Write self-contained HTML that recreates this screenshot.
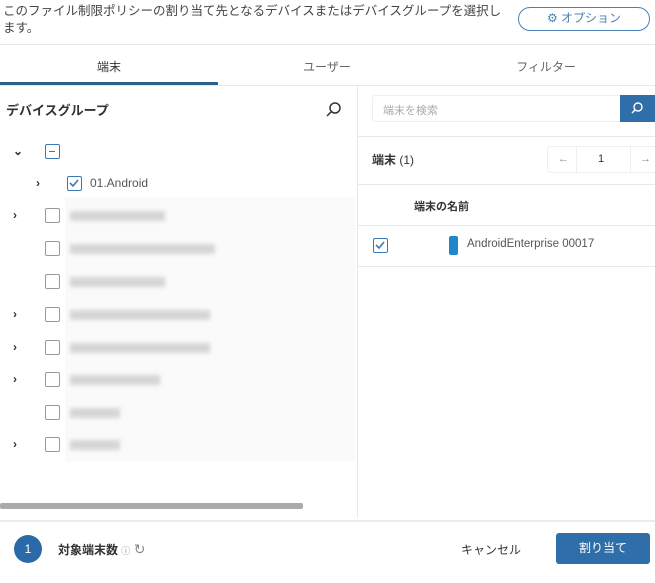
<!DOCTYPE html>
<html><head><meta charset="utf-8"><style>
*{margin:0;padding:0;box-sizing:border-box}
body{width:655px;height:583px;overflow:hidden;background:#fff;font-family:"Liberation Sans","Noto Sans CJK JP",sans-serif;color:#333;position:relative;font-size:12px}
.a{position:absolute}
.cb{position:absolute;width:15px;height:15px;border:1.5px solid #999;border-radius:2px;background:#fff}
.cbb{border-color:#3c78b4}
.chev{position:absolute;font-size:12px;color:#333;font-weight:bold}
.blur{position:absolute;height:10px;background:#ccc;filter:blur(2px);opacity:.8}
.hl{position:absolute;height:1px;background:#e8e8e8}
</style></head><body>
<div class="a" style="left:3px;top:3px;width:505px;font-size:12.5px;line-height:17px;color:#444">このファイル制限ポリシーの割り当て先となるデバイスまたはデバイスグループを選択します。</div>
<div class="a" style="left:518px;top:7px;width:132px;height:24px;border:1.5px solid #4a7fb5;border-radius:12px;font-size:12px;color:#4a7fb5;text-align:center;line-height:21px">⚙ オプション</div>
<div class="hl" style="left:0;top:44px;width:655px"></div>
<div class="a" style="left:0;top:58px;width:218px;text-align:center;font-size:12px">端末</div>
<div class="a" style="left:218px;top:58px;width:218px;text-align:center;font-size:12px;color:#666">ユーザー</div>
<div class="a" style="left:437px;top:58px;width:218px;text-align:center;font-size:12px;color:#666">フィルター</div>
<div class="a" style="left:0;top:82px;width:218px;height:3px;background:#2c5f8a"></div>
<div class="hl" style="left:0;top:85px;width:655px"></div>
<div class="a" style="left:357px;top:86px;width:1px;height:432px;background:#e8e8e8"></div>
<div class="a" style="left:6px;top:100px;font-size:13px;font-weight:bold">デバイスグループ</div>
<svg class="a" style="left:326px;top:101px" width="16" height="16"><circle cx="9" cy="7" r="5" fill="none" stroke="#333" stroke-width="1.5"/><line x1="5" y1="11" x2="1" y2="15" stroke="#333" stroke-width="1.5"/></svg>
<div class="chev" style="left:13px;top:144px">⌄</div>
<div class="cb cbb" style="left:45px;top:144px"><div style="position:absolute;left:3px;top:5.5px;width:6px;height:1.5px;background:#3c78b4"></div></div>
<div class="chev" style="left:36px;top:176px">›</div>
<div class="cb cbb" style="left:67px;top:176px"><svg width="12" height="12" style="position:absolute;left:0;top:0"><path d="M2 6 L5 9 L10 3" fill="none" stroke="#3c78b4" stroke-width="1.6"/></svg></div>
<div class="a" style="left:90px;top:176px;font-size:12px;color:#555">01.Android</div>
<div class="a" style="left:65px;top:197px;width:290px;height:265px;background:#fafafa"></div>
<div class="chev" style="left:13px;top:208px">›</div><div class="cb" style="left:45px;top:208px"></div><div class="blur" style="left:70px;top:211px;width:95px"></div>
<div class="cb" style="left:45px;top:241px"></div><div class="blur" style="left:70px;top:244px;width:145px"></div>
<div class="cb" style="left:45px;top:274px"></div><div class="blur" style="left:70px;top:277px;width:95px"></div>
<div class="chev" style="left:13px;top:307px">›</div><div class="cb" style="left:45px;top:307px"></div><div class="blur" style="left:70px;top:310px;width:140px"></div>
<div class="chev" style="left:13px;top:340px">›</div><div class="cb" style="left:45px;top:340px"></div><div class="blur" style="left:70px;top:343px;width:140px"></div>
<div class="chev" style="left:13px;top:372px">›</div><div class="cb" style="left:45px;top:372px"></div><div class="blur" style="left:70px;top:375px;width:90px"></div>
<div class="cb" style="left:45px;top:405px"></div><div class="blur" style="left:70px;top:408px;width:50px"></div>
<div class="chev" style="left:13px;top:437px">›</div><div class="cb" style="left:45px;top:437px"></div><div class="blur" style="left:70px;top:440px;width:50px"></div>
<div class="a" style="left:0;top:503px;width:303px;height:6px;background:#aaa;border-radius:2px"></div>
<div class="a" style="left:372px;top:95px;width:250px;height:27px;border:1px solid #eee;border-radius:3px;font-size:11px;color:#aaa;padding:6px 10px">端末を検索</div>
<div class="a" style="left:620px;top:95px;width:35px;height:27px;background:#2f6ea8"></div>
<svg class="a" style="left:630px;top:101px" width="14" height="14"><circle cx="8" cy="6" r="4" fill="none" stroke="#fff" stroke-width="1.4"/><line x1="5" y1="9" x2="2" y2="12" stroke="#fff" stroke-width="1.4"/></svg>
<div class="hl" style="left:358px;top:136px;width:297px"></div>
<div class="a" style="left:372px;top:151px;font-size:12px;font-weight:bold">端末 <span style="font-weight:normal">(1)</span></div>
<div class="a" style="left:547px;top:146px;width:110px;height:27px;border:1px solid #eee;border-radius:3px;font-size:11px;color:#888">
<span class="a" style="left:10px;top:6px">←</span><span class="a" style="left:28px;top:0;width:1px;height:25px;background:#eee"></span><span class="a" style="left:50px;top:6px;color:#333">1</span><span class="a" style="left:82px;top:0;width:1px;height:25px;background:#eee"></span><span class="a" style="left:92px;top:6px">→</span></div>
<div class="hl" style="left:358px;top:184px;width:297px"></div>
<div class="a" style="left:414px;top:198px;font-size:11px;font-weight:bold">端末の名前</div>
<div class="hl" style="left:358px;top:225px;width:297px"></div>
<div class="cb cbb" style="left:373px;top:238px"><svg width="12" height="12" style="position:absolute;left:0;top:0"><path d="M2 6 L5 9 L10 3" fill="none" stroke="#3c78b4" stroke-width="1.6"/></svg></div>
<div class="a" style="left:449px;top:236px;width:9px;height:19px;background:#1e88c8;border-radius:2px"></div>
<div class="a" style="left:467px;top:238px;font-size:11.5px;color:#555">AndroidEnterprise 00017</div>
<div class="hl" style="left:358px;top:266px;width:297px"></div>
<div class="a" style="left:0;top:520px;width:655px;height:2px;background:#ececec"></div>
<div class="a" style="left:14px;top:535px;width:28px;height:28px;border-radius:50%;background:#2a6aa8;color:#fff;text-align:center;line-height:28px;font-size:12px">1</div>
<div class="a" style="left:58px;top:541px;font-size:12px;font-weight:bold">対象端末数 <span style="font-size:9px;font-weight:normal;color:#888">ⓘ</span> <span style="font-weight:normal;color:#888;font-size:14px">↻</span></div>
<div class="a" style="left:461px;top:541px;font-size:12px">キャンセル</div>
<div class="a" style="left:556px;top:533px;width:94px;height:31px;background:#2f6ea8;border-radius:3px;color:#fff;text-align:center;line-height:31px;font-size:12px">割り当て</div>
</body></html>
